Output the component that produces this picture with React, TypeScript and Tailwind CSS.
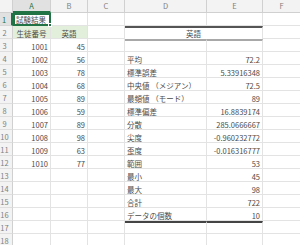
const ids = [1001, 1002, 1003, 1004, 1005, 1006, 1007, 1008, 1009, 1010];
const scores = [45, 56, 78, 68, 89, 59, 89, 98, 63, 77];

const stats: [string, string][] = [
	["平均", "72.2"],
	["標準誤差", "5.33916348"],
	["中央値 （メジアン）", "72.5"],
	["最頻値 （モード）", "89"],
	["標準偏差", "16.8839174"],
	["分散", "285.0666667"],
	["尖度", "-0.960232772"],
	["歪度", "-0.016316777"],
	["範囲", "53"],
	["最小", "45"],
	["最大", "98"],
	["合計", "722"],
	["データの個数", "10"],
];

const cell = "h-[13px] shrink-0 border-r border-b border-[#e3e3e3] px-[2px] leading-[15px] whitespace-nowrap overflow-hidden";

function Row({ n, children }: { n: number; children: React.ReactNode }) {
	const active = n === 1;
	return (
		<div className="flex">
			<div
				className={
					active
						? "h-[13px] w-[13px] shrink-0 border-r-2 border-b border-r-[#217346] border-b-[#d6d6d6] bg-[#e1e1e1] text-[#217346] text-center leading-[14px] pr-[3px]"
						: "h-[13px] w-[13px] shrink-0 border-r border-b border-r-[#d0d0d0] border-b-[#dedede] bg-[#f3f3f3] text-[#808080] text-center leading-[14px] pr-[3px] overflow-hidden"
				}
			>
				{n}
			</div>
			{children}
		</div>
	);
}

export default function App() {
	const rows = Array.from({ length: 18 }, (_, i) => i + 1);

	return (
		<div
			className="w-[300px] h-[245px] overflow-hidden bg-white text-[7.5px] text-[#4a4a4a]"
			style={{ fontFamily: '"Noto Sans CJK JP", "Noto Sans", sans-serif' }}
		>
			{/* column headers */}
			<div className="flex h-[13px] text-[#808080] leading-[12px]">
				<div className="w-[13px] shrink-0 bg-[#f3f3f3] border-r border-b border-[#d0d0d0]" />
				<div className="w-[38px] shrink-0 bg-[#e1e1e1] border-r border-r-[#d0d0d0] border-b-2 border-b-[#217346] text-center text-[#217346]">A</div>
				<div className="w-[37px] shrink-0 bg-[#f3f3f3] border-r border-b border-[#d0d0d0] text-center">B</div>
				<div className="w-[37px] shrink-0 bg-[#f3f3f3] border-r border-b border-[#d0d0d0] text-center">C</div>
				<div className="w-[82px] shrink-0 bg-[#f3f3f3] border-r border-b border-[#d0d0d0] text-center">D</div>
				<div className="w-[56px] shrink-0 bg-[#f3f3f3] border-r border-b border-[#d0d0d0] text-center">E</div>
				<div className="flex-1 bg-[#f3f3f3] border-b border-[#d0d0d0] text-center">F</div>
			</div>

			{rows.map((n) => {
				const dataIdx = n - 3;
				const statIdx = n - 4;
				const stat = statIdx >= 0 && statIdx < stats.length ? stats[statIdx] : null;

				if (n === 1) {
					return (
						<Row key={n} n={n}>
							<div className="relative h-[13px] w-[38px] shrink-0 border-2 border-[#217346] pl-[1px] leading-[10px] whitespace-nowrap">
								試験結果
								<span className="absolute -right-[3px] -bottom-[3px] h-[4px] w-[4px] bg-[#217346] border border-white" />
							</div>
							<div className={`${cell} w-[37px]`} />
							<div className={`${cell} w-[37px]`} />
							<div className={`${cell} w-[82px]`} />
							<div className={`${cell} w-[56px]`} />
							<div className={`${cell} flex-1 border-r-0`} />
						</Row>
					);
				}

				if (n === 2) {
					return (
						<Row key={n} n={n}>
							<div className={`${cell} w-[38px] bg-[#e2efda] text-center`}>生徒番号</div>
							<div className={`${cell} w-[37px] bg-[#e2efda] text-center`}>英語</div>
							<div className={`${cell} w-[37px]`} />
							<div className="h-[13px] w-[138px] shrink-0 border-t-2 border-t-[#555555] border-r border-r-[#e3e3e3] text-center leading-[12px]">英語</div>
							<div className={`${cell} flex-1 border-r-0`} />
						</Row>
					);
				}

				const dTop = n === 3 ? "border-t-2 border-t-[#a8a8a8] leading-[12px]" : n === 17 ? "border-t-2 border-t-[#444444] leading-[12px]" : "";

				return (
					<Row key={n} n={n}>
						<div className={`${cell} w-[38px] text-right`}>{dataIdx >= 0 && dataIdx < 10 ? ids[dataIdx] : ""}</div>
						<div className={`${cell} w-[37px] text-right`}>{dataIdx >= 0 && dataIdx < 10 ? scores[dataIdx] : ""}</div>
						<div className={`${cell} w-[37px]`} />
						<div className={`${cell} w-[82px] ${dTop}`}>{stat ? stat[0] : ""}</div>
						<div className={`${cell} w-[56px] text-right ${dTop}`}>{stat ? stat[1] : ""}</div>
						<div className={`${cell} flex-1 border-r-0`} />
					</Row>
				);
			})}
		</div>
	);
}
